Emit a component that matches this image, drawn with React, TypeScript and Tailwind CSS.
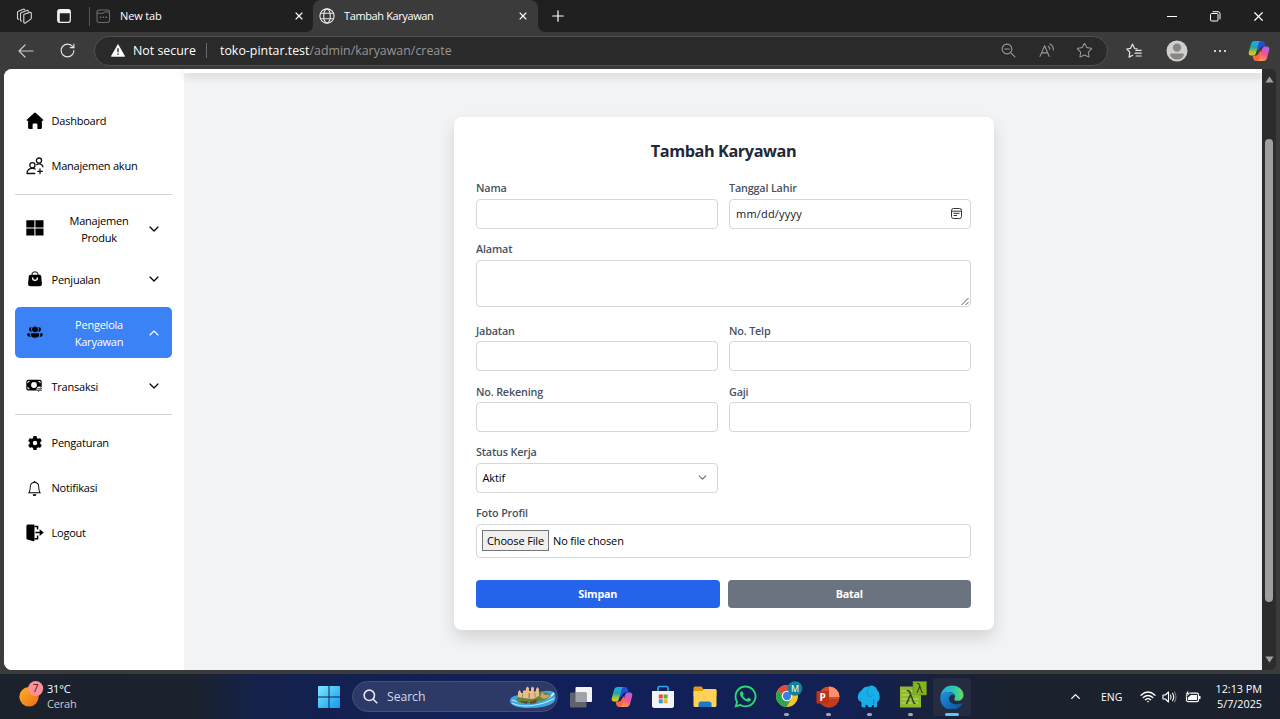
import React from 'react';
import { FaGear } from 'react-icons/fa6';
import { BsBell } from 'react-icons/bs';
import { FaWhatsapp } from 'react-icons/fa';
import { ChevronDown, ChevronUp, Star, X, Plus, RotateCw } from 'lucide-react';

type Kids = { children?: React.ReactNode };

/* ---------- Browser chrome icons ---------- */

const Workspaces = () => (
  <svg width="17" height="17" viewBox="0 0 17 17" fill="none" stroke="#d8d8d8" strokeWidth="1.100" strokeLinejoin="round" strokeLinecap="round">
    <path d="M8 6.200 13.800 4.400q1.500-.4 1.500 1V10q0 .9-.8 1.400l-4.800 3.300q-1.900 1.200-1.900-.8V7.500q0-1 .2-1.300z" />
    <path d="M5.800 13q-1.300.2-1.300-1.200V6q0-1.100 1-1.500l5.300-2q1.300-.4 1.600.7" />
    <path d="M2.700 11.300q-1.200 0-1.200-1.200V4.600q0-1 1-1.400l4.700-2Q8.500.8 8.800 1.800" />
  </svg>
);

const TabActions = () => (
  <svg width="14" height="14" viewBox="0 0 14 14" fill="none">
    <rect x="0.700" y="0.700" width="12.600" height="12.600" rx="2" stroke="#f2f2f2" strokeWidth="1.200" />
    <path d="M1 1h12v3.200H2.800V13H1z" fill="#f2f2f2" />
  </svg>
);

const NewTabIcon = () => (
  <svg width="15" height="15" viewBox="0 0 15 15" fill="none" stroke="#6c6c6c" strokeWidth="1.100">
    <rect x="1" y="1" width="12.500" height="12.500" rx="2.200" />
    <path d="M1 4.300h6.200l1.200-1.300h4.600" />
    <path d="M3.800 8.200h1.500M6.600 8.200h1.500M9.400 8.200h1.500" strokeWidth="1.600" />
  </svg>
);

const Globe = () => (
  <svg width="16" height="16" viewBox="0 0 16 16" fill="none" stroke="#e8e8e8" strokeWidth="1.100">
    <circle cx="8" cy="8" r="7.100" />
    <ellipse cx="8" cy="8" rx="3.300" ry="7.100" />
    <path d="M1.700 5.300h12.600M1.700 10.700h12.600" />
  </svg>
);

const BackArrow = () => (
  <svg width="16" height="14" viewBox="0 0 16 14" fill="none" stroke="#c9c9c9" strokeWidth="1.200" strokeLinecap="round" strokeLinejoin="round">
    <path d="M15 7H1M7 1 1 7l6 6" />
  </svg>
);

const Warning = () => (
  <svg width="14" height="13" viewBox="0 0 14 13">
    <path d="M7 .6 13.600 12.300H.4Z" fill="#fff" stroke="#fff" strokeWidth=".8" strokeLinejoin="round" />
    <path d="M6.300 4.200h1.400v4H6.300zM6.300 9.400h1.400v1.400H6.300z" fill="#2b2b2b" />
  </svg>
);

const ZoomOut = () => (
  <svg width="15" height="15" viewBox="0 0 15 15" fill="none" stroke="#999" strokeWidth="1.100" strokeLinecap="round">
    <circle cx="6" cy="6" r="4.900" />
    <path d="M3.800 6h4.400M9.600 9.600l4.300 4.300" />
  </svg>
);

const ReadAloud = () => (
  <svg width="16" height="15" viewBox="0 0 16 15" fill="none" stroke="#999" strokeWidth="1.100" strokeLinecap="round" strokeLinejoin="round">
    <path d="M1 13.400 5.600 2.800l4.600 10.600M2.600 9.900h6M9.200 3.300q1.500 1 1.500 3M11 1q3.400 1.800 3.400 6" />
  </svg>
);

const FavoritesList = () => (
  <svg width="16" height="16" viewBox="0 0 16 16" fill="none" stroke="#e6e6e6" strokeWidth="1.200" strokeLinecap="round" strokeLinejoin="round">
    <path d="M11 5.800 8.600 5.500 6.500 1.200 4.500 5.300.8 6l3 3.200-.7 4.900L6.700 12.300M9.800 7.300h5.400M9 10.200h6.200M10.200 13h5" />
  </svg>
);

const CopilotLogo = ({ size = 22, id }: { size?: number; id: string }) => (
  <svg width={size} height={size} viewBox="0 0 22 22">
    <defs>
      <linearGradient id={`${id}a`} x1="0" y1="0" x2="0" y2="1">
        <stop offset="0" stopColor="#19a8ee" />
        <stop offset=".45" stopColor="#27a7a0" />
        <stop offset=".75" stopColor="#a5c936" />
        <stop offset="1" stopColor="#f5c21b" />
      </linearGradient>
      <linearGradient id={`${id}b`} x1=".6" y1="0" x2=".3" y2="1">
        <stop offset="0" stopColor="#b45cf0" />
        <stop offset=".5" stopColor="#f0568e" />
        <stop offset="1" stopColor="#ff9a4d" />
      </linearGradient>
    </defs>
    <path d="M9 1h5q2 0 2.600 2l.8 3.500h-3q-2 0-2.600 2L9 12z" fill="#2350d8" />
    <path d="M13 21H8q-2 0-2.600-2l-.9-3.500h3.300q2 0 2.600-2L13 10z" fill="#f06a4a" />
    <path d="M6.500 1h6q-1.300.5-1.800 2.300L8 13q-.7 2.500-3 2.500H3Q.2 15.500.8 12L3 4q.8-3 3.500-3z" fill={`url(#${id}a)`} />
    <path d="M15.500 21h-6q1.300-.5 1.800-2.300L14 9q.7-2.500 3-2.500h2q2.800 0 2.200 3.500L19 18q-.8 3-3.500 3z" fill={`url(#${id}b)`} />
  </svg>
);

/* ---------- Sidebar icons ---------- */

const HomeIcon = () => (
  <svg width="18" height="18" viewBox="0 0 18 18">
    <path d="M8.100.9q.9-.7 1.800 0l7.300 6.800q.6.8-.4 1.100h-.9v6.700q0 1.500-1.500 1.500h-3v-4.200q0-1.200-1.200-1.200H7.800q-1.200 0-1.200 1.200V17h-3q-1.500 0-1.500-1.500V8.800h-.9q-1-.3-.4-1.100z" />
  </svg>
);

const AccountsIcon = () => (
  <svg width="18" height="18" viewBox="0 0 18 18" fill="none" stroke="#111" strokeWidth="1.300" strokeLinecap="round" strokeLinejoin="round">
    <circle cx="6.400" cy="8.200" r="2.600" />
    <path d="M8.800 16.500H1q.2-5.200 5.400-5.200 1.700 0 2.800.7M14 12v4.600M11.700 14.300h4.600" />
    <circle cx="13" cy="3.600" r="2.600" />
    <path d="M10.700 7.600q4.700-2 6.200 2.200" />
  </svg>
);

const GridIcon = () => (
  <svg width="18" height="16" viewBox="0 0 18 16">
    <path d="M.3.200h8.100v7.200H.3zM9.400.2h8.100v7.200H9.400zM.3 8.400h8.100v7.200H.3zM9.400 8.400h8.100v7.200H9.400z" />
  </svg>
);

const BagIcon = () => (
  <svg width="14" height="16" viewBox="0 0 14 16" fill="none">
    <path d="M4 5V3.800a3 3 0 0 1 6 0V5" stroke="#444" strokeWidth="1.200" />
    <path d="M2.500 3.800h9q1.500 0 1.700 1.500l.7 7.300q.1 2.600-2.300 2.600H2.400Q0 15.200.1 12.600l.7-7.300Q1 3.800 2.500 3.800z" fill="#000" />
    <path d="M4.600 7a2.400 2.400 0 0 0 4.800 0" stroke="#fff" strokeWidth="1.300" strokeLinecap="round" />
  </svg>
);

const TeamIcon = () => (
  <svg width="16" height="12" viewBox="0 0 16 12">
    <circle cx="8" cy="3.300" r="2.900" />
    <path d="M4.500 1.200a3.900 3.900 0 0 0 .3 4.300A2.200 2.200 0 1 1 4.500 1.200zM11.500 1.200a3.900 3.900 0 0 1-.3 4.300 2.200 2.200 0 1 0 .3-4.300z" />
    <path d="M4.600 7.300h6.800q.8 0 .8.900 0 3.500-4.200 3.500T3.800 8.200q0-.9.800-.9zM2.800 7.300q-.6 2 .8 3.500Q.3 10.800.2 8.200q0-.9.900-.9zM13.200 7.300q.6 2-.8 3.500 3.300 0 3.400-2.600 0-.9-.9-.9z" />
  </svg>
);

const MoneyIcon = () => (
  <svg width="17" height="14" viewBox="0 0 17 14">
    <rect x="0.300" y="0.800" width="15.400" height="10.600" rx="2" />
    <circle cx="8" cy="6" r="2.900" fill="#fff" />
    <path d="M1.900 4.200V2.500h1.700M12.400 2.500h1.700v1.700M1.900 8v1.700h1.700" stroke="#fff" strokeWidth=".9" fill="none" />
    <circle cx="13.500" cy="10.500" r="3" fill="#fff" />
    <path d="M11.300 9.800h4.500l-1.400-1.300M15.800 11.300h-4.500l1.400 1.300" fill="none" stroke="#333" strokeWidth="1" />
  </svg>
);

const LogoutIcon = () => (
  <svg width="18" height="18" viewBox="0 0 18 18">
    <path d="M.4 1.400 1.500.5h6.300q.7 0 .7.700v15.400q0 .9-.9.700L1.200 15.500q-.8-.3-.8-1.200z" />
    <path d="M8.500 2.400h3.100v3.200M8.500 14.800h3.100v-3.200M9.400 8.600h4.800" fill="none" stroke="#000" strokeWidth="1.500" />
    <path d="M13.600 5.300 17.800 8.600l-4.200 3.300z" />
  </svg>
);

/* ---------- Sidebar ---------- */

type NavProps = { icon: React.ReactNode; label: string };

const NavLink = ({ icon, label }: NavProps) => (
  <a className="flex h-[34px] items-center pl-[10px]">
    <span className="mb-px flex w-[19px] justify-center">{icon}</span>
    <span className="ml-[7.500px] whitespace-nowrap">{label}</span>
  </a>
);

const NavGroup = ({ icon, label, open = false, tall = false }: NavProps & { open?: boolean; tall?: boolean }) => (
  <button
    className={`flex w-full items-center rounded-[5px] pr-[10.500px] pl-[10px] ${tall ? 'h-[51px]' : 'h-[34px]'} ${
      open ? 'bg-[#3b82f6] text-white' : ''
    }`}
  >
    <span className="mb-px flex w-[19px] justify-center text-black">{icon}</span>
    <span className={`ml-[7.500px] flex-1 leading-[17px] ${tall ? 'pr-[12px] pl-[13px] text-center' : 'text-left'}`}>{label}</span>
    {open ? <ChevronUp size={16} strokeWidth={1.700} /> : <ChevronDown size={16} strokeWidth={1.900} />}
  </button>
);

const Sidebar = () => (
  <aside className="flex w-[180px] shrink-0 flex-col bg-white pt-[35.500px] pr-[12px] pl-[11px] text-[11px] tracking-[-0.230px] text-black">
    <NavLink icon={<HomeIcon />} label="Dashboard" />
    <div className="h-[11px]" />
    <NavLink icon={<AccountsIcon />} label="Manajemen akun" />
    <div className="mt-[10.500px] mb-[8px] h-px shrink-0 bg-[#cfd6da]" />
    <NavGroup icon={<GridIcon />} label="Manajemen Produk" tall />
    <div className="h-[8px]" />
    <NavGroup icon={<BagIcon />} label="Penjualan" />
    <div className="h-[11px]" />
    <NavGroup icon={<TeamIcon />} label="Pengelola Karyawan" tall open />
    <div className="h-[11px]" />
    <NavGroup icon={<MoneyIcon />} label="Transaksi" />
    <div className="mt-[11px] mb-[11.500px] h-px shrink-0 bg-[#cfd3da]" />
    <NavLink icon={<FaGear size={14} />} label="Pengaturan" />
    <div className="h-[11px]" />
    <NavLink icon={<BsBell size={15} />} label="Notifikasi" />
    <div className="h-[11px]" />
    <NavLink icon={<LogoutIcon />} label="Logout" />
  </aside>
);

/* ---------- Form ---------- */

const Label = ({ children }: Kids) => (
  <label className="flex h-[17px] items-center pt-px text-[10.800px] font-semibold tracking-[-0.170px] text-[#465161]">{children}</label>
);

const box = 'w-full rounded-[4px] border border-[#d3d6db] bg-white';

const Field = ({ label, children }: Kids & { label: string }) => (
  <div className="flex-1">
    <Label>{label}</Label>
    <div className="mt-[2px]">{children ?? <input className={`block h-[30px] ${box}`} />}</div>
  </div>
);

const EmployeeForm = () => (
  <form className="h-[513px] w-[540px] rounded-[8px] bg-white px-[22.500px] pt-[22px] shadow-[0_8px_16px_rgba(0,0,0,0.13)]">
    <h2 className="flex h-[25px] items-center justify-center text-[16.300px] font-bold tracking-[-0.430px] text-[#1f2937]">Tambah Karyawan</h2>
    <div className="mt-[15.500px] flex gap-[11px]">
      <Field label="Nama" />
      <Field label="Tanggal Lahir">
        <div className={`flex h-[30px] items-center justify-between pr-[8px] pl-[6px] text-[11px] text-[#111827] ${box}`}>
          <span className="pt-px tracking-[0.200px]">mm/dd/yyyy</span>
          <svg width="11" height="11" viewBox="0 0 11 11" fill="none" stroke="#333">
            <rect x=".5" y=".5" width="10" height="10" rx="2" />
            <path d="M.5 3.200h10M2.500 5.300h6M2.500 7.500h3.500" />
          </svg>
        </div>
      </Field>
    </div>
    <div className="mt-[12px] flex">
      <Field label="Alamat">
        <div className={`flex h-[47px] items-end justify-end ${box}`}>
          <svg width="10" height="9" viewBox="0 0 10 9" stroke="#555" strokeWidth="1">
            <path d="M1.500 8 8.500 1M5.500 8l3-3" />
          </svg>
        </div>
      </Field>
    </div>
    <div className="mt-[15.500px] flex gap-[11px]">
      <Field label="Jabatan" />
      <Field label="No. Telp" />
    </div>
    <div className="mt-[12px] flex gap-[11px]">
      <Field label="No. Rekening" />
      <Field label="Gaji" />
    </div>
    <div className="mt-[11.500px] flex gap-[11px]">
      <Field label="Status Kerja">
        <div className={`flex h-[30px] items-center justify-between pr-[8px] pl-[5.500px] text-[11px] text-black ${box}`}>
          <span className="pt-px tracking-[-0.100px]">Aktif</span>
          <ChevronDown size={13} strokeWidth={2.300} className="text-[#6b7280]" />
        </div>
      </Field>
      <div className="flex-1" />
    </div>
    <div className="mt-[12px] flex">
      <Field label="Foto Profil">
        <div className={`flex h-[34px] items-center pl-[5px] text-[11px] tracking-[-0.150px] text-black ${box}`}>
          <span className="flex h-[21px] w-[67px] items-center justify-center border border-[#767676] bg-[#efefef] pt-px">Choose File</span>
          <span className="ml-[4px] pt-px">No file chosen</span>
        </div>
      </Field>
    </div>
    <div className="mt-[22px] flex gap-[8px] text-[10.800px] font-bold tracking-[-0.250px] text-white">
      <button className="h-[28px] flex-1 rounded-[4px] bg-[#2563eb] pt-px">Simpan</button>
      <button className="h-[28px] flex-1 rounded-[4px] bg-[#6b7280] pt-px">Batal</button>
    </div>
  </form>
);

/* ---------- Browser chrome ---------- */

const TabBar = () => (
  <div className="flex h-[32px] shrink-0 bg-[#3b3b3b] text-[11px] tracking-[-0.130px] text-white">
    <div className="flex w-[313px] items-center rounded-br-[7px] bg-[#202020] pl-[16px]">
      <Workspaces />
      <div className="ml-[24px]"><TabActions /></div>
      <div className="ml-[18px] h-[19px] w-px bg-[#555]" />
      <div className="ml-[6px] flex flex-1 items-center">
        <NewTabIcon />
        <span className="ml-[9px] flex-1">New tab</span>
        <X size={12} strokeWidth={2.200} className="mr-[8px]" />
      </div>
    </div>
    <div className="w-[225px] bg-[linear-gradient(#202020_50%,#3b3b3b_50%)]">
      <div className="flex h-[32px] items-center rounded-t-[8px] bg-[#3b3b3b] pl-[6px] tracking-[-0.380px]">
        <Globe />
        <span className="ml-[9px] flex-1">Tambah Karyawan</span>
        <X size={12} strokeWidth={2.200} className="mr-[9px]" />
      </div>
    </div>
    <div className="flex flex-1 items-center rounded-bl-[7px] bg-[#202020]">
      <Plus size={18} strokeWidth={1.600} className="ml-[11px]" />
      <div className="ml-auto flex items-center">
        <div className="h-px w-[10px] bg-white" />
        <svg className="ml-[33px]" width="11" height="11" viewBox="0 0 11 11" fill="none" stroke="#fff">
          <rect x=".5" y="2.500" width="7.500" height="7.500" rx="1" />
          <path d="M2.500.7H8q2 0 2 2v5.600" />
        </svg>
        <X size={15} strokeWidth={1.900} className="mr-[14px] ml-[30px]" />
      </div>
    </div>
  </div>
);

const Toolbar = () => (
  <div className="flex h-[37px] shrink-0 items-center bg-[#3b3b3b]">
    <div className="ml-[18px]"><BackArrow /></div>
    <RotateCw size={17} strokeWidth={1.600} className="ml-[25px] text-[#e4e4e4]" />
    <div className="ml-[18px] flex h-[30px] w-[1014px] items-center rounded-full border border-[#505050] bg-[#2a2a2a] text-[12.400px] text-white">
      <div className="ml-[16px]"><Warning /></div>
      <span className="ml-[8px] w-[65px] pt-px whitespace-nowrap">Not secure</span>
      <span className="ml-[8px] h-[15px] w-px bg-[#6a6a6a]" />
      <span className="ml-[13px] flex-1 pt-[2px]">
        toko-pintar.test<span className="text-[#969696]">/admin/karyawan/create</span>
      </span>
      <ZoomOut />
      <div className="ml-[23px]"><ReadAloud /></div>
      <Star size={17} strokeWidth={1.500} className="mr-[14px] ml-[21px] text-[#999]" />
    </div>
    <div className="ml-[18px]"><FavoritesList /></div>
    <svg className="ml-[24px]" width="22" height="22" viewBox="0 0 22 22">
      <circle cx="11" cy="11" r="10.500" fill="#d0cfcd" />
      <circle cx="11" cy="7.600" r="4.200" fill="#8b8682" />
      <path d="M4 14.800q0-1.300 1.500-1.300h11q1.500 0 1.500 1.300-1.500 4.700-7 4.700t-7-4.700z" fill="#8b8682" />
    </svg>
    <div className="ml-[26px] flex gap-[3px]">
      <i className="h-[2px] w-[2px] rounded-full bg-white" />
      <i className="h-[2px] w-[2px] rounded-full bg-white" />
      <i className="h-[2px] w-[2px] rounded-full bg-white" />
    </div>
    <div className="ml-[22px]"><CopilotLogo id="cpt" /></div>
  </div>
);

const Scrollbar = () => (
  <div className="flex w-[14px] shrink-0 flex-col items-center rounded-r-[6px] bg-[#2c2c2c]">
    <svg className="mt-[7px]" width="9" height="7" viewBox="0 0 9 7"><path d="M4.500.4 8.600 6.500H.4z" fill="#9f9f9f" /></svg>
    <div className="mt-[56px] h-[463px] w-[8px] rounded-full bg-[#9f9f9f]" />
    <svg className="mt-[54px]" width="9" height="7" viewBox="0 0 9 7"><path d="M4.500 6.600 8.600.5H.4z" fill="#9f9f9f" /></svg>
  </div>
);

/* ---------- Taskbar ---------- */

const WeatherIcon = () => (
  <svg width="26" height="28" viewBox="0 0 26 28">
    <defs>
      <linearGradient id="sun" x1="0" y1="0" x2="1" y2="1">
        <stop offset="0" stopColor="#f8b52c" />
        <stop offset="1" stopColor="#ef6a10" />
      </linearGradient>
    </defs>
    <circle cx="11" cy="15.800" r="9.700" fill="url(#sun)" />
    <circle cx="17.700" cy="7.600" r="7.500" fill="#ff8f98" />
    <text x="17.700" y="11.200" textAnchor="middle" fontSize="10" fill="#3b1518" fontFamily="Open Sans, sans-serif">7</text>
  </svg>
);

const StartIcon = () => (
  <svg width="22" height="22" viewBox="0 0 22 22">
    <defs>
      <linearGradient id="win" x1="0" y1="0" x2="1" y2="1">
        <stop offset="0" stopColor="#7be8ff" />
        <stop offset="1" stopColor="#1398ee" />
      </linearGradient>
    </defs>
    <path d="M0 1q0-1 1-1h9.500v10.500H0zM11.500 0H21q1 0 1 1v9.500H11.500zM0 11.500h10.500V22H1q-1 0-1-1zM11.500 11.500H22V21q0 1-1 1h-9.500z" fill="url(#win)" />
  </svg>
);

const CastleArt = () => (
  <svg width="48" height="24" viewBox="0 0 48 24">
    <path d="M1 15q1-5 12-5l22-4q10-1 11 3 2 5-2 9-7 5.500-27 5Q0 22 1 15z" fill="#3da5e4" />
    <path d="M3 18q8 4 20 2.500t22-7M3 15q5 2 10 2" stroke="#b5e6f6" strokeWidth="1.200" fill="none" />
    <path d="M35 14q6-1 10-6" stroke="#e9f4f4" strokeWidth="1.800" fill="none" />
    <path d="M7 15q2-5 10-5l14-3q10 0 11 4-5 5-11 5l-6 3-11-1q-6 0-7-3z" fill="#5e8a3f" />
    <path d="M9 12V7l1.500-2L12 7v1h2V6l2-1 1 1V3l1.500-1.500L20 3v3h2V3l1.500-1.500L25 3v4l2-1V4l1.500-2L30 4v7l-6 3-10-1z" fill="#e6bd8c" />
    <path d="M13 13V9h1v4zM19.500 13V8h1.500v5zM25.500 12V8h1v4z" fill="#b97f55" />
    <path d="M31 12l2-5 3 3 4 0 1-1-1 3-5 2z" fill="#cf9f74" />
    <path d="M11 16h8l-1 3-5-1zM20 17l8-3-1 4-5 1z" fill="#6b4a35" />
  </svg>
);

const TaskView = () => (
  <svg width="24" height="22" viewBox="0 0 24 22">
    <rect x="6.500" y="1" width="16.500" height="15" rx="1" fill="#f4f4f6" />
    <rect x="1" y="6.500" width="16.500" height="15" rx="1" fill="#5f626b" />
    <path d="M6.500 6.500h11V16h-11z" fill="#a2a3a9" />
  </svg>
);

const StoreIcon = () => (
  <svg width="22" height="24" viewBox="0 0 22 24">
    <path d="M6 7V3q0-1.500 1.500-1.500h7Q16 1.500 16 3v4" fill="none" stroke="#2ba4e8" strokeWidth="1.700" />
    <path d="M0 6h22v14.500q0 2.500-2.500 2.500h-17Q0 23 0 20.500z" fill="#f3f3f5" />
    <path d="M6.800 9.500h4v4h-4z" fill="#e8502c" />
    <path d="M11.600 9.500h4v4h-4z" fill="#71a82d" />
    <path d="M6.800 14.300h4v4h-4z" fill="#2c9be0" />
    <path d="M11.600 14.300h4v4h-4z" fill="#f2b21c" />
  </svg>
);

const FolderIcon = () => (
  <svg width="24" height="22" viewBox="0 0 24 22">
    <path d="M.5 2q0-1.500 1.500-1.500h6q1 0 1.500 1l.7 1.500H22q1.500 0 1.500 1.500V10H.5z" fill="#e29a10" />
    <path d="M.5 5h9l1.500-2h11q1.500 0 1.500 1.500v15q0 1.500-1.500 1.500H2q-1.500 0-1.500-1.500z" fill="#ffd15a" />
    <path d="M5.500 21v-3q0-2.500 2.500-2.500h8q2.500 0 2.500 2.500v3z" fill="#1b78c8" />
  </svg>
);

const ChromeIcon = () => (
  <svg width="28" height="27" viewBox="0 0 28 27">
    <circle cx="12" cy="15" r="11" fill="#f5c52c" />
    <path d="M12 15 2.500 9.500A11 11 0 0 1 21.500 9.500z" fill="#e5473b" />
    <path d="M12 4A11 11 0 0 1 21.500 9.500H12z" fill="#e5473b" />
    <path d="M12 15 2.500 9.500A11 11 0 0 0 11.500 26l5-8.500z" fill="#2da44f" />
    <circle cx="12" cy="15" r="5.300" fill="#fff" />
    <circle cx="12" cy="15" r="4.200" fill="#377fe4" />
    <circle cx="20" cy="7.500" r="7.300" fill="#138394" />
    <text x="20" y="11" textAnchor="middle" fontSize="9" fill="#fff" fontFamily="Open Sans, sans-serif">M</text>
  </svg>
);

const PowerPointIcon = () => (
  <svg width="24" height="22" viewBox="0 0 24 22">
    <circle cx="13" cy="11" r="10.500" fill="#d64a28" />
    <path d="M13 .5A10.500 10.500 0 0 1 23.500 11H13z" fill="#ff9070" />
    <path d="M2.700 13h20.600a10.500 10.500 0 0 1-20.600 0z" fill="#c43a1e" />
    <rect x=".5" y="5" width="12.500" height="12.500" rx="1.200" fill="#bb3418" />
    <text x="6.700" y="14.800" textAnchor="middle" fontSize="10" fontWeight="700" fill="#fff" fontFamily="Open Sans, sans-serif">P</text>
  </svg>
);

const ElephantIcon = () => (
  <svg width="24" height="23" viewBox="0 0 24 23">
    <path d="M.8 12q.2-4.500 3.700-6.500Q7 1 12 1.500q2-1.500 4.500-.5 2.500.8 3.500 3.500 3 3.500 2.800 8-.1 3.500-2.500 4.500l-.3 4.500q-1.500 1.200-3.300.8v-2.300l-1.700.3v1.500q-3 1-4.500-.2v-1.800l-2 .2v2.300q-2.500.7-4-.5V17Q.7 16 .8 12z" fill="#18aee8" />
    <path d="M12 2.500Q8.500 6 10.500 10.500 13 13 16 10M4.500 13q-.5 2-2 2.500" stroke="#1192cc" strokeWidth=".9" fill="none" />
    <path d="M16.700 14v5" stroke="#0b78b4" strokeWidth=".9" />
  </svg>
);

const LambdaIcon = () => (
  <svg width="28" height="27" viewBox="0 0 28 27" overflow="visible">
    <rect x="1" y="5.500" width="21" height="21" fill="#8dbb2b" />
    <path d="M2.500 10h17M2.500 14h17M2.500 18h17M2.500 22h17" stroke="#bcdc72" />
    <text x="11.500" y="22.500" textAnchor="middle" fontSize="18" fill="#2d3b18" fontFamily="Open Sans, sans-serif">λ</text>
    <rect x="14" y=".5" width="13.500" height="13.500" fill="#84b422" stroke="#5f8714" strokeWidth=".6" />
    <text x="20.700" y="11.500" textAnchor="middle" fontSize="12" fill="#26350f" fontFamily="Open Sans, sans-serif">λ</text>
  </svg>
);

const EdgeIcon = () => (
  <svg width="24" height="24" viewBox="0 0 24 24">
    <defs>
      <linearGradient id="edgeTop" x1="0" y1=".5" x2="1" y2=".5">
        <stop offset="0" stopColor="#25a7e3" />
        <stop offset=".6" stopColor="#2cc7b2" />
        <stop offset="1" stopColor="#6ddc55" />
      </linearGradient>
      <linearGradient id="edgeLow" x1="0" y1="0" x2="1" y2="1">
        <stop offset="0" stopColor="#1f94e0" />
        <stop offset="1" stopColor="#0b4d9c" />
      </linearGradient>
    </defs>
    <path d="M.5 11.500A11.500 11.500 0 0 1 12 .5c7 0 11.500 4.800 11.500 9.500 0 3.600-2.700 5.800-5.700 5.800-2.800 0-4-1.200-3.400-2.400.5-1 .7-1.600.5-2.700-.5-2-2.500-3.700-6-3.700-4 0-7.500 2-8.400 4.500z" fill="url(#edgeTop)" />
    <path d="M.5 11.500C1 8.500 4 7 8.500 7 11.500 7 14 8.400 14.700 10c-4-1.300-6 1.500-5.700 4 .4 4.200 6 6.800 12.200 4.600.8-.2 1 .2.500.8A11.500 11.500 0 0 1 .5 11.500z" fill="url(#edgeLow)" />
  </svg>
);

const TaskSlot = ({ children, dot = false, active = false }: Kids & { dot?: boolean; active?: boolean }) => (
  <div className={`flex h-[38px] w-[38px] shrink-0 flex-col items-center justify-between rounded-[4px] ${active ? 'bg-[#252c3f]' : ''}`}>
    <div className="flex h-[34px] items-center pt-[4px]">{children}</div>
    <div className={`h-[2.500px] shrink-0 rounded-full ${active ? 'w-[14px] bg-[#60c6f5]' : dot ? 'w-[5px] bg-[#a4a5ae]' : 'w-[5px]'}`} />
  </div>
);

const Taskbar = () => (
  <div className="flex h-[45px] shrink-0 items-center bg-[linear-gradient(90deg,#1c222c_0%,#1b212d_15%,#14214b_20%,#11205a_40%,#122054_66%,#19213b_73%,#1b222e_79%,#1b212d_100%)] text-white">
    <div className="ml-[18px] flex w-[299px] items-center">
      <div className="-mt-[4px]"><WeatherIcon /></div>
      <div className="-mt-px ml-[3px] text-[11px] leading-[15px] tracking-[-0.200px]">
        <div>31°C</div>
        <div className="text-[#c9cbd0]">Cerah</div>
      </div>
    </div>
    <div className="ml-[1px]"><StartIcon /></div>
    <div className="ml-[12px] flex h-[31px] w-[206px] shrink-0 items-center rounded-full border border-[#43507f] bg-[#2d3a68]">
      <svg className="ml-[10px]" width="15" height="15" viewBox="0 0 15 15" fill="none" stroke="#e4e8f2" strokeWidth="1.600" strokeLinecap="round">
        <circle cx="6.300" cy="6.300" r="5.200" />
        <path d="m10.200 10.200 3.600 3.600" />
      </svg>
      <span className="ml-[9px] flex-1 pt-[2px] text-[12.300px] tracking-[-0.100px] text-[#d3d7e4]">Search</span>
      <CastleArt />
    </div>
    <div className="ml-[4px] flex gap-[3.200px]">
      <TaskSlot><TaskView /></TaskSlot>
      <TaskSlot><CopilotLogo id="cpb" /></TaskSlot>
      <TaskSlot><StoreIcon /></TaskSlot>
      <TaskSlot><FolderIcon /></TaskSlot>
      <TaskSlot><FaWhatsapp size={25} color="#2fd672" /></TaskSlot>
      <TaskSlot dot><div className="-mt-[4px] pl-[4px]"><ChromeIcon /></div></TaskSlot>
      <TaskSlot dot><PowerPointIcon /></TaskSlot>
      <TaskSlot dot><ElephantIcon /></TaskSlot>
      <TaskSlot dot><div className="-mt-[4px] pl-[4px]"><LambdaIcon /></div></TaskSlot>
      <TaskSlot active><EdgeIcon /></TaskSlot>
    </div>
    <div className="ml-auto flex items-center">
      <ChevronUp size={15} strokeWidth={2.200} />
      <span className="ml-[18px] w-[22px] pt-[2px] text-[10.500px] whitespace-nowrap">ENG</span>
      <svg className="ml-[17px]" width="16" height="12" viewBox="0 0 16 12" fill="none" stroke="#fff" strokeWidth="1.300" strokeLinecap="round">
        <path d="M1 4.300q7-6.500 14 0M3.200 6.600q4.800-4.200 9.600 0M5.400 8.700q2.600-2.200 5.200 0" />
        <circle cx="8" cy="10.600" r=".8" fill="#fff" stroke="none" />
      </svg>
      <svg className="ml-[6px]" width="15" height="12" viewBox="0 0 15 12" fill="none" stroke="#fff" strokeWidth="1.100" strokeLinejoin="round" strokeLinecap="round">
        <path d="M1 4h2.300L6.500 1v10L3.300 8H1zM8.500 4q1.300 2 0 4M10.500 2.300q2.500 3.700 0 7.400" />
        <path d="M12.500 1q3 5 0 10" stroke="#777d88" />
      </svg>
      <svg className="ml-[8px]" width="16" height="13" viewBox="0 0 16 13">
        <rect x="1.500" y="3.200" width="12" height="8.500" rx="1.800" fill="none" stroke="#fff" strokeWidth="1.200" />
        <path d="M3 9.900V7.500L6 5h6v4.900zM14 6h1.500v3H14z" fill="#fff" />
        <path d="M3.500 0 .3 4h2L1.800 7 5.300 3H3.200z" fill="#fff" stroke="#1b212d" strokeWidth=".5" />
      </svg>
      <div className="-mt-px mr-[18px] ml-[13px] w-[48px] text-right text-[10.800px] leading-[15px] whitespace-nowrap">
        <div>12:13 PM</div>
        <div>5/7/2025</div>
      </div>
    </div>
  </div>
);

export default function App() {
  return (
    <div className="flex h-[719px] w-[1280px] flex-col overflow-hidden bg-[#3b3b3b] font-['Open_Sans','Noto_Sans',sans-serif]">
      <TabBar />
      <Toolbar />
      <div className="flex h-[605px] shrink-0 pb-[4px] pl-[4px]">
        <div className="flex w-[1258px] overflow-hidden rounded-l-[8px] bg-[#f2f3f5]">
          <Sidebar />
          <main className="flex flex-1 flex-col">
            <div className="h-[4px] shrink-0 bg-white shadow-[0_3px_8px_rgba(0,0,0,0.2)]" />
            <div className="flex justify-center pt-[44px] pl-px">
              <EmployeeForm />
            </div>
          </main>
        </div>
        <Scrollbar />
      </div>
      <Taskbar />
    </div>
  );
}
